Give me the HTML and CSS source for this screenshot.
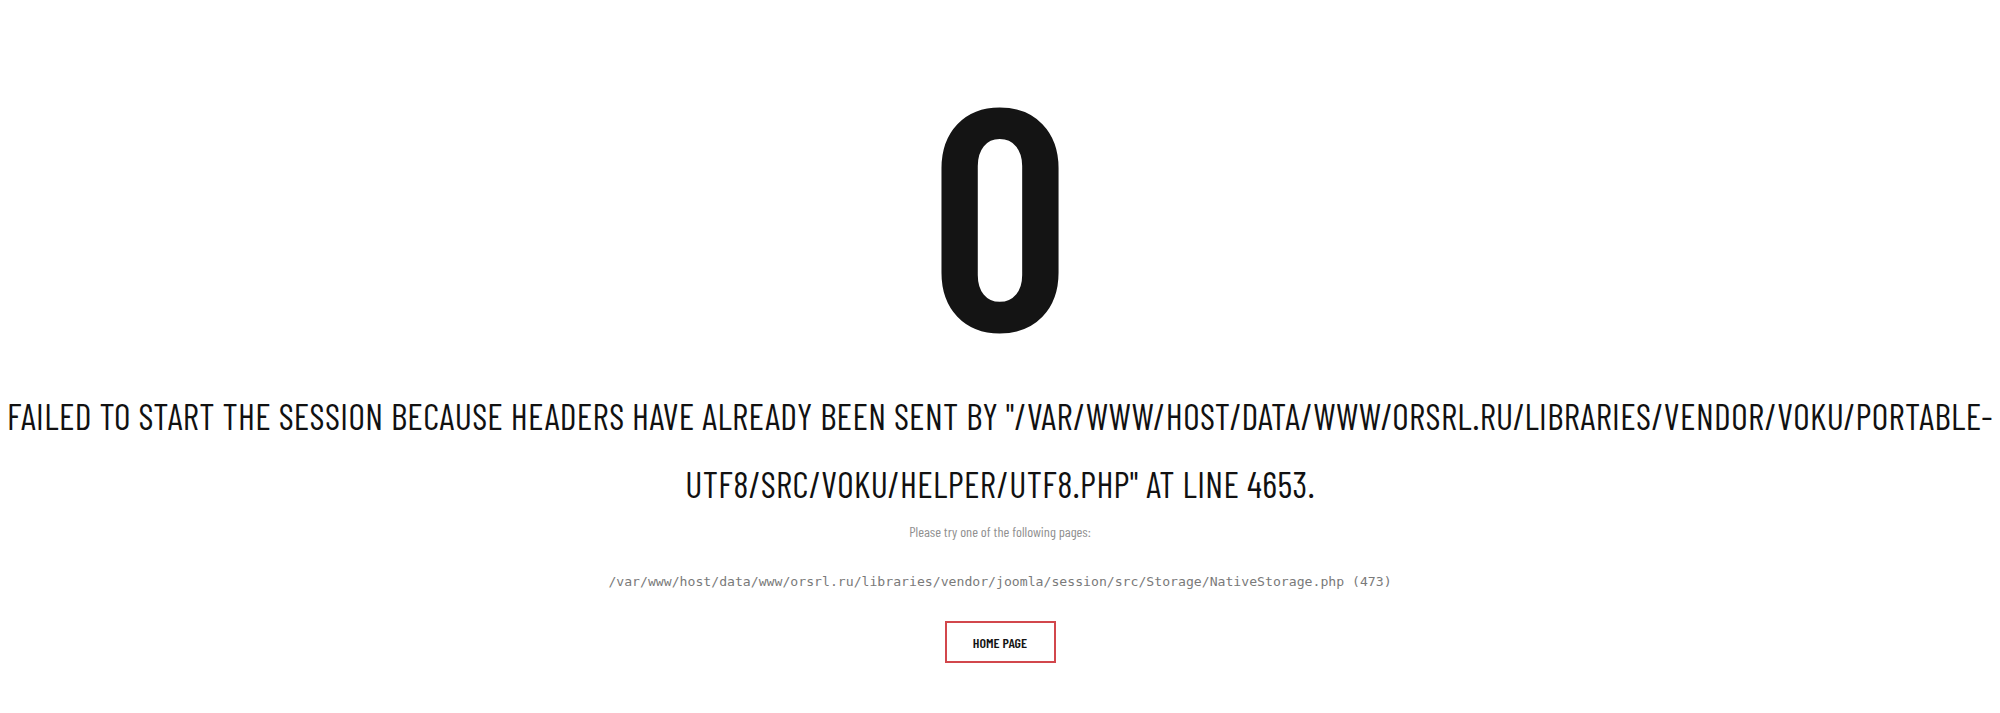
FILE: index.html
```html
<!DOCTYPE html>
<html lang="en">
<head>
<meta charset="utf-8">
<title>0 - Error</title>
<link rel="stylesheet" href="styles.css">
</head>
<body>
<main class="error-page">
  <div class="error-code">0</div>
  <h1 class="error-message">Failed to start the session because headers have already been sent by "/var/www/host/data/www/orsrl.ru/libraries/vendor/voku/portable-utf8/src/voku/helper/UTF8.php" at line 4653.</h1>
  <p class="error-hint">Please try one of the following pages:</p>
  <p class="error-trace">/var/www/host/data/www/orsrl.ru/libraries/vendor/joomla/session/src/Storage/NativeStorage.php (473)</p>
  <div class="error-actions">
    <a class="home-btn" href="#">Home Page</a>
  </div>
</main>
</body>
</html>
```
FILE: styles.css
```css
html, body {
  margin: 0;
  padding: 0;
  background: #ffffff;
}

body {
  font-family: "Barlow Condensed", "Roboto Condensed", "Liberation Sans Narrow", "DejaVu Sans Condensed", "Liberation Sans", sans-serif;
  color: #141414;
}

.error-page {
  display: flex;
  flex-direction: column;
  align-items: center;
  text-align: center;
  padding: 49px 4px 0;
}

.error-code {
  font-size: 313px;
  line-height: 313px;
  font-weight: 600;
  color: #141414;
  height: 333px;
}

.error-message {
  margin: 0;
  font-size: 36px;
  line-height: 68px;
  font-weight: 400;
  text-transform: uppercase;
  color: #111111;
  letter-spacing: 0.4px;
}

.error-hint {
  margin: 4px 0 0;
  font-size: 14.3px;
  line-height: 20px;
  color: #8f8f8f;
}

.error-trace {
  margin: 29px 0 0;
  font-family: "DejaVu Sans Mono", "Liberation Mono", monospace;
  font-size: 13.15px;
  line-height: 22px;
  color: #7a7a7a;
}

.error-actions {
  margin-top: 28px;
}

.home-btn {
  display: flex;
  align-items: center;
  justify-content: center;
  box-sizing: border-box;
  width: 111px;
  height: 42px;
  border: 2px solid #d2474c;
  color: #151515;
  font-size: 14px;
  font-weight: 600;
  text-transform: uppercase;
  text-decoration: none;
}
```
